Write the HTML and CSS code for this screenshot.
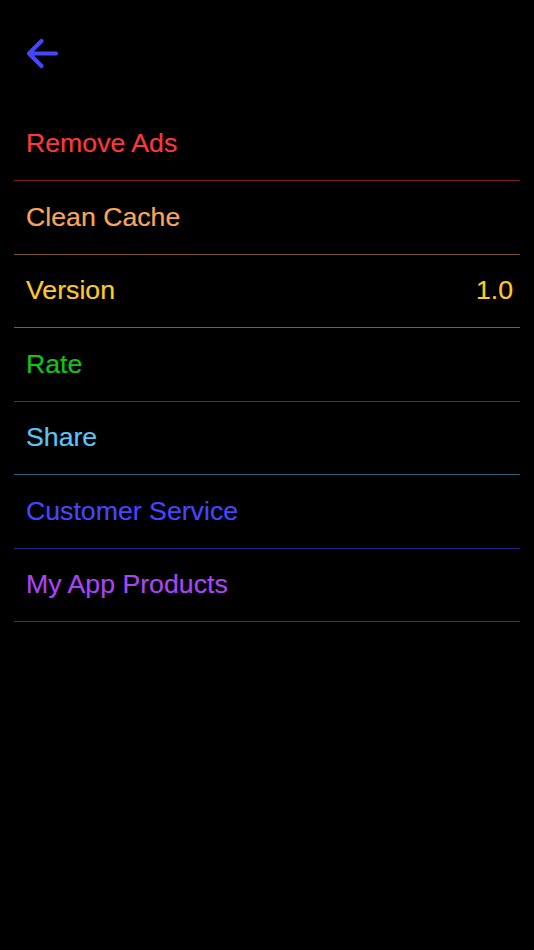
FILE: index.html
```html
<!DOCTYPE html>
<html>
<head>
<meta charset="utf-8">
<link rel="stylesheet" href="styles.css">
</head>
<body>
<div class="screen">
  <header class="topbar">
    <svg class="back" width="40" height="40" viewBox="0 0 40 40">
      <path d="M36 20.5 H9 M21.5 8 L9 20.5 L21.5 33" fill="none" stroke="#4646ff" stroke-width="4.2" stroke-linecap="round" stroke-linejoin="round"/>
    </svg>
  </header>
  <ul class="menu">
    <li class="row red"><span>Remove Ads</span></li>
    <li class="row orange"><span>Clean Cache</span></li>
    <li class="row yellow"><span>Version</span><span class="value">1.0</span></li>
    <li class="row green"><span>Rate</span></li>
    <li class="row sky"><span>Share</span></li>
    <li class="row blue"><span>Customer Service</span></li>
    <li class="row purple"><span>My App Products</span></li>
  </ul>
</div>
</body>
</html>
```
FILE: styles.css
```css
html, body {
  margin: 0;
  padding: 0;
  background: #000;
}
.screen {
  width: 534px;
  height: 950px;
  background: #000;
  font-family: "Liberation Sans", Arial, sans-serif;
}
.topbar {
  height: 107.5px;
  display: flex;
  align-items: flex-start;
}
.back {
  display: block;
  margin-left: 20px;
  margin-top: 33px;
}
.menu {
  list-style: none;
  margin: 0 14px;
  padding: 0;
}
.row {
  height: 72.5px;
  border-bottom-width: 1.2px;
  border-bottom-style: solid;
  display: flex;
  align-items: center;
  justify-content: space-between;
  padding: 0 7px 0 12px;
  font-size: 26.7px;
  -webkit-text-stroke: 0.2px currentColor;
}
.red { color: #f83a3a; border-bottom-color: #7c1d1d; }
.orange { color: #f7a65b; border-bottom-color: #7c532e; }
.yellow { color: #fccb2a; border-bottom-color: #7e6515; }
.green { color: #14c414; border-bottom-color: #0a620a; }
.sky { color: #5bc3f5; border-bottom-color: #2e627b; }
.blue { color: #4646ff; border-bottom-color: #232380; }
.purple { color: #a846f2; border-bottom-color: #542379; }
```
